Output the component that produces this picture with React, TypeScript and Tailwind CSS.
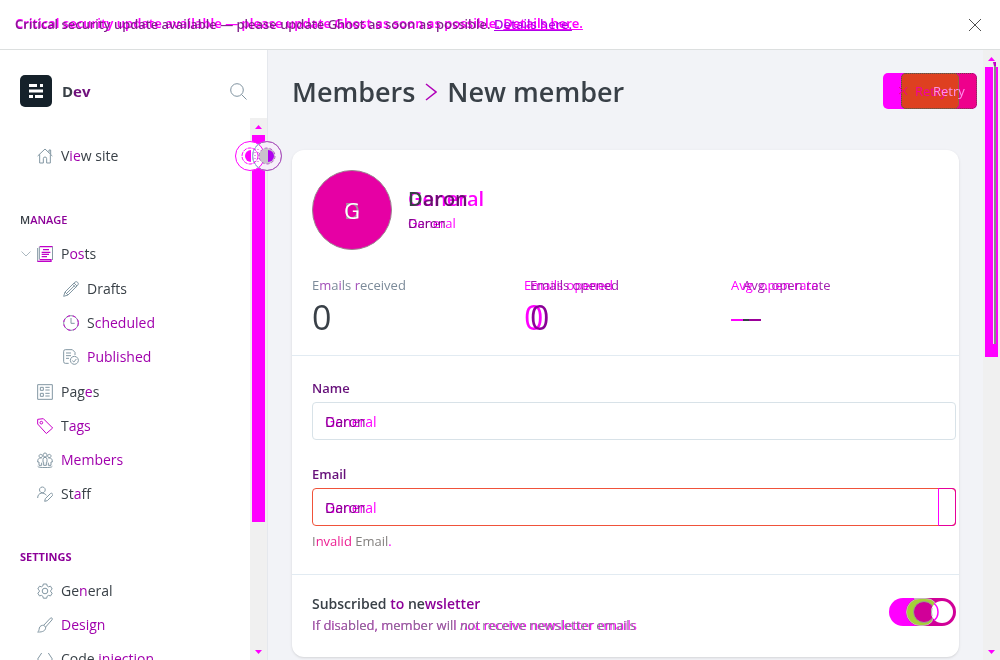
import type { ReactNode } from "react";

type IconName =
  | "home" | "posts" | "pencil" | "clock" | "published" | "pages"
  | "tag" | "members" | "staff" | "gear" | "brush" | "code";

const drawings: Record<IconName, ReactNode> = {
  home: <path d="M1 12 12 1.5 23 12M4 9.5V22.5H9.5V16a2.5 2.5 0 0 1 5 0V22.5H20V9.5M18 7V3h2.5V9" />,
  posts: (
    <g>
      <path d="M1 3V23M3.5 1V20" />
      <path className="stroke-[#c000c8]" strokeWidth="2" d="M4 1H23.5M.5 23.3H21V20.5H4M9 5.5H18M7 9.5H20M7 12.5H18M7 16H15" />
      <path d="M23.3 1V21" />
    </g>
  ),
  pencil: <path d="M1 23 3 16.5 17.5 2a3 3 0 0 1 4.5 4.5L7.5 21ZM3 16.5 7.5 21M14.5 5 19 9.5M16.5 3 21 7.5M5.5 18.5 17.5 6.8" />,
  clock: (
    <g>
      <circle cx="12" cy="12" r="11" />
      <circle cx="12" cy="12" r="11" className="stroke-[#c800d0]" strokeDasharray="5 4" />
      <path d="M12 4.5V12.5H17.5" />
    </g>
  ),
  published: <path d="M8.5 21.5H3.5A2.5 2.5 0 0 1 1 19V3.500A2.500 2.500 0 0 1 3.500 1H14L18 5V9M4.500 6H12M4.500 10H12M4.500 14H9M17 11a6 6 0 1 0 .1 0M14 17.500 16.300 19.500 20 15" />,
  pages: <path d="M1 1H23V23H1ZM5 5H9.500V9.500H5ZM5 14H9.500V18.500H5ZM12.500 5H19M12.500 9H19M12.500 14H19M12.500 18H19" />,
  tag: (
    <g className="stroke-[#c800c8]">
      <path d="M1 2V9L14 23.300 23.500 15 9.500 1Z" />
      <circle cx="6.500" cy="7" r="2" />
    </g>
  ),
  members: <path d="M1 21.500c0 2.500 22 2.500 22 0M9 15.500V11a3 3 0 0 1 6 0V15.500H14V20H10V15.500ZM12 1.500a3 3 0 1 0 .1 0M5.500 3.500a2.500 2.500 0 1 0 .1 0M18.500 3.500a2.500 2.500 0 1 0 .1 0M7 9C3 8.500 1 10 1 15H3V20H7V16M17 9c4-.5 6 1 6 6H21V20H17V16" />,
  staff: <path d="M8 1.500a4.300 4.300 0 1 0 .1 0M1 18c0-9 10-9 13-4M11.500 23 12.500 19 20 11.500a2 2 0 0 1 3 3L15.500 22Z" />,
  gear: (
    <g>
      <circle cx="12" cy="12" r="4.200" />
      <path d="M9.500 1.500h5l.8 3 2 1.200 3-.9 2.500 4.300L20.600 11v2.200l2.200 2-2.500 4.200-3-.8-2 1.200-.8 3h-5l-.8-3-2-1.200-3 .8-2.500-4.200 2.200-2V11L1.200 9l2.500-4.200 3 .9 2-1.200Z" />
    </g>
  ),
  brush: <path d="M10 12.500 20 1.800c2-1.500 4 .5 2.500 2.500L13 15M10 12.500 13 15C13.500 20 9 23 1 22.500c2-1.500 2-3 2.500-6 .7-3 4-4.500 6.500-4Z" />,
  code: <path d="M7 3 1 12 7 21M17 3 23 12 17 21" />,
};

function Icon({ name }: { name: IconName }) {
  return (
    <svg viewBox="0 0 24 24" className="size-4 shrink-0 fill-none stroke-[#8397a3]" strokeWidth="1.5" aria-hidden="true">
      {drawings[name]}
    </svg>
  );
}

/** Text of the current run with the changed run laid over it. */
function Layered({ base, changed, layer = "left-0 top-0" }: { base: ReactNode; changed: ReactNode; layer?: string }) {
  return (
    <span className="relative inline-block whitespace-nowrap">
      <span aria-hidden="true" className={`absolute text-[#f0f] ${layer}`}>{changed}</span>
      <span className="relative">{base}</span>
    </span>
  );
}

function NavItem({ icon, same, diff = "", tail = "", nested = false, open = false }: {
  icon: IconName; same: string; diff?: string; tail?: string; nested?: boolean; open?: boolean;
}) {
  return (
    <a href="#" className={`relative flex h-[34px] items-center gap-2 text-sm ${nested ? "pl-[63px]" : "pl-[37px]"}`}>
      {open && (
        <svg viewBox="0 0 10 6" className="absolute left-[21px] h-1.5 w-2.5 fill-none stroke-[#abb8c0]" aria-hidden="true">
          <path d="M.5.500 5 5 9.500.5" />
        </svg>
      )}
      <Icon name={icon} />
      <span>{same}<span className="text-[#a000ac]">{diff}</span>{tail}</span>
    </a>
  );
}

function Scroller({ thumb }: { thumb: string }) {
  return (
    <div className="flex w-[17px] shrink-0 flex-col items-center bg-[#f0f0f0]" aria-hidden="true">
      <svg viewBox="0 0 17 17" className="h-[17px] w-full shrink-0 fill-[#f0f]"><path d="M5 11 8.500 7 12 11Z" /></svg>
      <div className={`w-[13px] bg-[#f0f] ${thumb}`} />
      <svg viewBox="0 0 17 17" className="mt-auto h-[17px] w-full shrink-0 fill-[#f0f]"><path d="M5 7 8.500 11 12 7Z" /></svg>
    </div>
  );
}

function Sidebar() {
  return (
    <aside className="relative flex w-[268px] shrink-0 flex-col border-r border-[#e5e8ed] bg-white">
      <div className="flex items-center gap-2.5 pt-[25px] pr-5 pb-[11px] pl-5">
        <svg viewBox="0 0 32 32" className="size-8" aria-hidden="true">
          <rect width="32" height="32" rx="5" fill="#15212a" />
          <path fill="#fff" d="M9 9h8v3H9zM20 9h3v3h-3zM9 14.500h14v3H9zM9 20h4v3H9zM15 20h8v3h-8z" />
        </svg>
        <span className="text-[15px] font-bold">D<span className="text-[#70107c]">ev</span></span>
        <button aria-label="Search" className="ml-auto">
          <svg viewBox="0 0 17 17" className="size-[17px] fill-none stroke-[#8093a0]"><circle cx="7" cy="7" r="6.300" /><path d="m11.500 11.500 5 5" /></svg>
        </button>
      </div>
      <div className="flex min-h-0 flex-1">
        <nav className="min-w-0 flex-1 overflow-hidden pt-[21px]">
          <div className="mb-[30px]"><NavItem icon="home" same="V" diff="ie" tail="w site" /></div>
          <div className="mb-[29px]">
            <h2 className="flex h-[34px] items-center pl-5 text-[11px] font-semibold">M<span className="text-[#8c0098]">ANAGE</span></h2>
            <NavItem icon="posts" same="P" diff="os" tail="ts" open />
            <div className="py-px">
              <NavItem icon="pencil" same="Drafts" nested />
              <NavItem icon="clock" same="S" diff="cheduled" nested />
              <NavItem icon="published" same="" diff="Published" nested />
            </div>
            <NavItem icon="pages" same="Pag" diff="e" tail="s" />
            <NavItem icon="tag" same="T" diff="ags" />
            <NavItem icon="members" same="" diff="Members" />
            <NavItem icon="staff" same="St" diff="a" tail="ff" />
          </div>
          <h2 className="flex h-[34px] items-center pl-5 text-[11px] font-bold text-[#8c0098]">SETTINGS</h2>
          <NavItem icon="gear" same="Ge" diff="n" tail="eral" />
          <NavItem icon="brush" same="" diff="Design" />
          <NavItem icon="code" same="Code " diff="injection" />
        </nav>
        <Scroller thumb="h-[387px]" />
      </div>
      <svg viewBox="0 0 48 32" className="absolute top-[90px] left-[235px] z-10 h-8 w-12 fill-none" aria-hidden="true">
        <circle cx="32" cy="16" r="14.500" fill="#f6f0fa" stroke="#b2a8b8" />
        <circle cx="15" cy="16" r="14.500" fill="#fff" stroke="#f0f" />
        <circle cx="32" cy="16" r="14.500" stroke="#b04ec4" />
        <path d="M24 4a14.500 14.500 0 0 0 0 24" stroke="#8fc5de" />
        <circle cx="15" cy="16" r="8" stroke="#f0f" strokeDasharray="4 1" />
        <path fill="#f0f" d="M16 10a6 6 0 0 0 0 12Z" />
        <circle cx="32" cy="16" r="8" fill="#c9c2cc" stroke="#b960cc" strokeDasharray="3 2" />
        <path fill="#b000f0" d="M33 10a6 6 0 0 1 0 12Z" />
        <path d="M20 9v14M23 9v14" stroke="#c050cc" strokeDasharray="1 2" />
      </svg>
    </aside>
  );
}

function Toggle() {
  return (
    <label className="block shrink-0">
      <input type="checkbox" defaultChecked aria-label="Subscribed to newsletter" className="sr-only" />
      <svg viewBox="0 0 67 28" className="h-7 w-[67px]" aria-hidden="true">
        <rect width="50" height="28" rx="14" fill="#f0f" />
        <rect x="17" width="50" height="28" rx="14" fill="#d10098" />
        <path fill="#a4d037" stroke="#c8b5be" d="M25 .5h11q7 0 10 4l-3 19q-3 4-9 4h-3a13.500 13.500 0 0 1 0-27Z" />
        <circle cx="35" cy="14" r="10.500" fill="#d10098" stroke="#999f91" />
        <circle cx="53" cy="14" r="11" fill="#fff" />
        <path d="M45 5.500q4 3 4 8.500t-4 8.500" fill="none" stroke="#f0f" strokeWidth="1.500" />
        <path d="M43 10q-1 4 0 8" fill="none" stroke="#aaa" />
      </svg>
    </label>
  );
}

function Field({ id, label, border, children }: { id: string; label: string; border: string; children?: ReactNode }) {
  return (
    <div>
      <label htmlFor={id} className="block h-6 text-[13px] leading-5 font-semibold text-[#66107a]">{label}</label>
      <div className="relative">
        <input id={id} defaultValue="Daron" className={`h-[38px] w-full rounded border pl-3 text-sm text-[#7b1586] ${border}`} />
        <span aria-hidden="true" className="pointer-events-none absolute inset-y-0 left-[13px] text-sm leading-10 text-[#f0f] mix-blend-multiply">General</span>
        {children}
      </div>
    </div>
  );
}

function MemberCard() {
  return (
    <section className="mr-6 rounded-xl bg-white shadow-sm">
      <div className="flex h-[120px] items-center gap-4 pl-5">
        <div className="relative flex size-20 items-center justify-center rounded-full border border-[#9c8490] bg-[#e600a4] text-[22px] text-[#a6909c]">
          D<span aria-hidden="true" className="absolute text-white">G</span>
        </div>
        <div className="pb-0.5">
          <h2 className="text-xl leading-7 font-semibold"><Layered base={<>D<span className="text-[#68106f]">aron</span></>} changed="General" /></h2>
          <p className="text-[13px] leading-5"><Layered base={<span className="text-[#70107c]">Daron</span>} changed="General" /></p>
        </div>
      </div>
      <div className="grid h-[85px] grid-cols-[212fr_207fr_228fr] pt-[5px] pl-5 text-[13px]">
        <div>
          <div className="leading-5 text-[#7c8b9a]">E<span className="text-[#a24fb8]">m</span>a<span className="text-[#a24fb8]">i</span>ls <span className="text-[#a24fb8]">r</span>eceived</div>
          <div className="text-[34px] leading-[44px]">0</div>
        </div>
        <div>
          <div className="leading-5"><Layered changed="Emails opened" base={<span className="pl-1.5 text-[#9a16a9]">Emails opened</span>} /></div>
          <div className="text-[34px] leading-[44px]"><Layered changed="0" base={<span className="pl-1.5 text-[#8c0098]">0</span>} /></div>
        </div>
        <div>
          <div className="leading-5"><Layered changed="Avg. open rate" base={<span className="pl-3 text-[#a322b0]">Avg. open rate</span>} /></div>
          <div className="mt-6 flex h-0.5" aria-label="No open rate">
            <span className="w-3 bg-[#f0f]" /><span className="w-1.5 bg-[#394047]" /><span className="w-3 bg-[#9a0098]" />
          </div>
        </div>
      </div>
      <div className="flex flex-col gap-6 border-y border-[#e2ebf2] pt-[22px] pr-[3px] pb-[23px] pl-5">
        <Field id="name" label="Name" border="border-[#d8e2e8]" />
        <div>
          <Field id="email" label="Email" border="border-[#f0523a]">
            <span aria-hidden="true" className="absolute inset-y-0 right-0 w-[18px] rounded-r border border-[#e6009a] border-l-[#f0f]" />
          </Field>
          <p className="mt-[5px] text-[13px] leading-5 text-[#84817f]">I<span className="text-[#ec1f92]">nvalid</span> Email<span className="text-[#f0f]">.</span></p>
        </div>
      </div>
      <div className="flex h-[82px] items-center pr-[3px] pb-2 pl-5">
        <div className="min-w-0 flex-1 pt-1">
          <h3 className="text-sm leading-[22px] font-semibold">Subscribed <span className="text-[#8c0098]">to</span> ne<span className="text-[#8c0098]">wsletter</span></h3>
          <p className="text-[13px] leading-5"><Layered changed="If disabled, member will not receive newsletter emails" base={<span className="text-[#87778f]">If disabled, member will <em>not</em> receive newsletter emails</span>} /></p>
        </div>
        <Toggle />
      </div>
    </section>
  );
}

export default function App() {
  return (
    <div className="flex h-screen flex-col overflow-hidden bg-[#f2f3f7] font-['Open_Sans',sans-serif] text-[#394047]">
      <header className="flex h-[50px] shrink-0 items-center justify-between border-b border-[#dcdfdf] bg-white pr-[18px] pl-[15px] font-['Noto_Sans',sans-serif] text-[13px]">
        <Layered
          layer="left-0 bottom-px font-semibold"
          changed={<>Critical security update available — please update Ghost as soon as possible. <u>Details here.</u></>}
          base={<span className="font-medium text-[#80208b]">Critical security update available — please update Ghost as soon as possible. <a href="#" className="text-[#b000e8] underline">Details here.</a></span>}
        />
        <button aria-label="Close"><svg viewBox="0 0 14 14" className="size-3.5 stroke-[#505050]"><path d="m1 1 12 12M13 1 1 13" /></svg></button>
      </header>
      <div className="flex min-h-0 flex-1">
        <Sidebar />
        <main className="min-w-0 flex-1 overflow-hidden pl-6">
          <div className="flex h-[100px] items-center justify-between pr-1.5 pb-[18px]">
            <h1 className="flex items-center gap-2.5 pt-0.5 text-[27px] font-semibold">
              <a href="#">Members</a>
              <svg viewBox="0 0 12 18" className="h-[18px] w-3 fill-none stroke-[#b000b8]" strokeWidth="1.500" aria-hidden="true"><path d="m1 1 10 8-10 8" /></svg>
              <span>New member</span>
            </h1>
            <button className="relative h-9 w-[94px] overflow-hidden rounded-[5px] bg-[#f0f] text-[13px] text-white">
              <span aria-hidden="true" className="absolute inset-y-0 right-0 left-[18px] rounded-[5px] bg-[#ee008c]" />
              <span aria-hidden="true" className="absolute inset-y-0 right-[18px] left-[18px] rounded-[5px] border border-[#9c6336] bg-[#de4020]" />
              <span aria-hidden="true" className="absolute inset-y-0 right-0 left-[18px] rounded-[5px] border border-dotted border-[#69424c]" />
              <svg viewBox="0 0 12 12" className="absolute top-3 left-3.5 size-3 fill-none stroke-[#f0008c]" aria-hidden="true"><path d="M10 2 7 6l3 4M2 2l4 4-4 3" /></svg>
              <span aria-hidden="true" className="absolute top-2 left-8 leading-5 text-[#f000a0]">Retry</span>
              <span className="absolute top-2 left-[50px] leading-5 text-[#ff90ec]">Retry</span>
            </button>
          </div>
          <MemberCard />
        </main>
        <div className="relative flex">
          <Scroller thumb="h-[290px]" />
          <span aria-hidden="true" className="absolute top-3 left-2.5 h-[282px] w-[3px] border-t-4 border-l border-t-[#c000c8] border-l-[#eee] bg-[#888]" />
        </div>
      </div>
    </div>
  );
}
